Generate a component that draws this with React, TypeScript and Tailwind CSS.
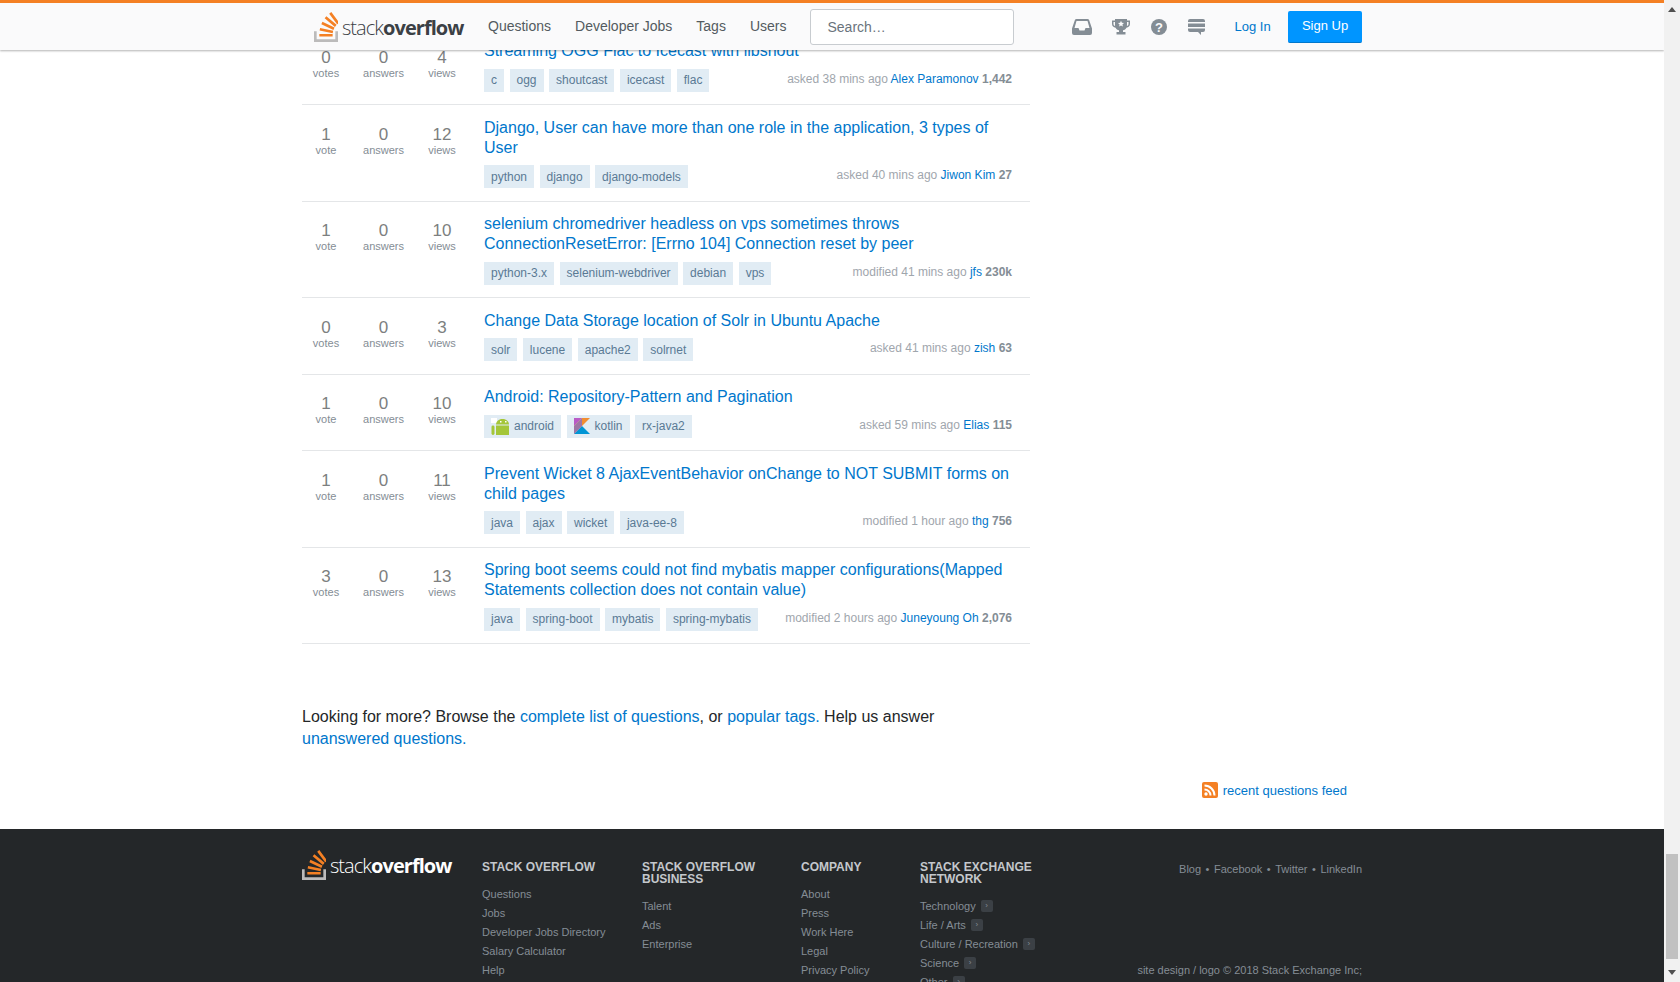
import React from 'react';

const FONT = "font-['Liberation_Sans',Arial,sans-serif]";

interface Question {
  votes: number;
  views: number;
  title: string;
  tags: string[];
  action: string;
  user: string;
  rep: string;
}

const QUESTIONS: Question[] = [
  { votes: 0, views: 4, title: 'Streaming OGG Flac to Icecast with libshout', tags: ['c', 'ogg', 'shoutcast', 'icecast', 'flac'], action: 'asked 38 mins ago', user: 'Alex Paramonov', rep: '1,442' },
  { votes: 1, views: 12, title: 'Django, User can have more than one role in the application, 3 types of User', tags: ['python', 'django', 'django-models'], action: 'asked 40 mins ago', user: 'Jiwon Kim', rep: '27' },
  { votes: 1, views: 10, title: 'selenium chromedriver headless on vps sometimes throws ConnectionResetError: [Errno 104] Connection reset by peer', tags: ['python-3.x', 'selenium-webdriver', 'debian', 'vps'], action: 'modified 41 mins ago', user: 'jfs', rep: '230k' },
  { votes: 0, views: 3, title: 'Change Data Storage location of Solr in Ubuntu Apache', tags: ['solr', 'lucene', 'apache2', 'solrnet'], action: 'asked 41 mins ago', user: 'zish', rep: '63' },
  { votes: 1, views: 10, title: 'Android: Repository-Pattern and Pagination', tags: ['android', 'kotlin', 'rx-java2'], action: 'asked 59 mins ago', user: 'Elias', rep: '115' },
  { votes: 1, views: 11, title: 'Prevent Wicket 8 AjaxEventBehavior onChange to NOT SUBMIT forms on child pages', tags: ['java', 'ajax', 'wicket', 'java-ee-8'], action: 'modified 1 hour ago', user: 'thg', rep: '756' },
  { votes: 3, views: 13, title: 'Spring boot seems could not find mybatis mapper configurations(Mapped Statements collection does not contain value)', tags: ['java', 'spring-boot', 'mybatis', 'spring-mybatis'], action: 'modified 2 hours ago', user: 'Juneyoung Oh', rep: '2,076' },
];

// Stack Overflow mark: tray plus fanned orange bars
const LogoMark = () => (
  <svg width="24" height="30" viewBox="22.6 14.9 69.5 86.6" className="shrink-0">
    <path d="M84.4 93.8V70.6h7.700v30.900H22.600V70.600h7.700v23.200z" fill="#bcbbbb" />
    <path
      d="M38.800 68.400l37.800 7.900 1.600-7.600-37.800-7.900-1.600 7.600zm5-18l35 16.300 3.200-7-35-16.400-3.200 7.100zm9.700-17.200l29.700 24.700 4.900-5.900-29.700-24.700-4.900 5.900zm19.200-18.300l-6.200 4.600 23 31 6.200-4.600-23-31zM38 86h38.600v-7.700H38V86z"
      fill="#f48024"
    />
  </svg>
);

const Logo = ({ dark }: { dark?: boolean }) => (
  <div className="flex items-end gap-[4px]">
    <LogoMark />
    <span className={`pb-[1px] font-['Open_Sans',sans-serif] text-[20px] leading-[26px] tracking-[-0.95px] whitespace-nowrap ${dark ? 'text-white' : 'text-[#3b4045]'}`}>
      <span className="font-light">stack</span>
      <span className="font-bold">overflow</span>
    </span>
  </div>
);

const AndroidIcon = () => (
  <svg width="18" height="17" viewBox="0 0 18 17" className="shrink-0">
    <rect x="0" y="0" width="6" height="5" fill="#fff" />
    <path d="M5 6.500C5 3.500 7.500 1 11.500 1S18 3.500 18 6.500z" fill="#a4c639" />
    <rect x="9" y="3" width="1.500" height="1.500" fill="#fff" />
    <rect x="14" y="3" width="1.500" height="1.500" fill="#fff" />
    <rect x="5" y="7.500" width="13" height="9.500" fill="#a4c639" />
    <rect x="0.500" y="7.500" width="3" height="9.500" rx="1.400" fill="#a4c639" />
  </svg>
);

const KotlinIcon = () => (
  <svg width="16" height="16" viewBox="0 0 16 16" className="shrink-0">
    <path d="M0 0h8L0 8z" fill="#b95bc6" />
    <path d="M8 0h8L0 16V8z" fill="#f18e33" />
    <path d="M0 16l8-8 8 8z" fill="#0095d5" />
    <path d="M8 0 0 8v8L8 8z" fill="#7a6cd6" opacity=".7" />
  </svg>
);

const Tag = ({ name }: { name: string }) => (
  <span className="flex h-[23px] items-center gap-[5px] bg-[#e1ecf4] px-[7px] text-[12px] text-[#5a7a94]">
    {name === 'android' && <AndroidIcon />}
    {name === 'kotlin' && <KotlinIcon />}
    {name}
  </span>
);

const Stat = ({ value, label, width }: { value: number; label: string; width: string }) => (
  <div className={`flex flex-col items-center ${width}`}>
    <span className="text-[17px] leading-[16px] text-[#7d7f80]">{value}</span>
    <span className="text-[11px] leading-[14px] text-[#848d95]">{label}</span>
  </div>
);

const QuestionRow = ({ q }: { q: Question }) => (
  <div className="flex border-b border-[#e4e6e8] pt-[12.500px] pb-[12.500px]">
    <div className="flex w-[182px] shrink-0 pt-[9px]">
      <Stat value={q.votes} label={q.votes === 1 ? 'vote' : 'votes'} width="w-[48px]" />
      <Stat value={0} label="answers" width="w-[67px]" />
      <Stat value={q.views} label="views" width="w-[50px]" />
    </div>
    <div className="min-w-0 flex-1 pr-[18px]">
      <a className="block text-[16px] leading-[20px] text-[#0077cc]">{q.title}</a>
      <div className="mt-[7.500px] flex items-center justify-between">
        <div className="flex gap-[5.500px]">
          {q.tags.map((t) => (
            <Tag key={t} name={t} />
          ))}
        </div>
        <div className="-mt-[3px] text-[12px] text-[#9fa6ad]">
          {q.action} <a className="text-[#0077cc]">{q.user}</a> <b className="text-[#848d95]">{q.rep}</b>
        </div>
      </div>
    </div>
  </div>
);

const FooterColumn = ({ title, links, width, chevrons }: { title: string; links: string[]; width: string; chevrons?: boolean }) => (
  <div className={width}>
    <h5 className="text-[12px] leading-[12px] font-bold uppercase text-[#c4c8cc]">{title}</h5>
    <ul className="mt-[12px]">
      {links.map((l) => (
        <li key={l} className="flex h-[19px] items-center gap-[5px] text-[11px] text-[#848d95]">
          {l}
          {chevrons && (
            <span className="flex h-[12px] w-[12px] items-center justify-center rounded-[2px] bg-[#3b4045] text-[8px] leading-none text-[#848d95]">›</span>
          )}
        </li>
      ))}
    </ul>
  </div>
);

const Header = () => (
  <header className="absolute top-0 left-0 z-10 h-[50px] w-full border-t-[3px] border-[#f48024] bg-[#fafafb] shadow-[0_1px_2px_rgba(0,0,0,0.3)]">
    <div className="mx-auto flex h-full w-[1060px] items-center text-[14px] whitespace-nowrap text-[#535a60]">
      <div className="ml-[12px] w-[174px] shrink-0">
        <Logo />
      </div>
      <nav className="flex shrink-0 gap-[24px]">
        <a>Questions</a>
        <a>Developer Jobs</a>
        <a>Tags</a>
        <a>Users</a>
      </nav>
      <div className="ml-[24px] flex h-[36px] w-[204px] shrink-0 items-center rounded-[3px] border border-[#c8ccd0] bg-white px-[16px] pt-[1px] text-[14px] text-[#6a737c]">
        Search…
      </div>
      <div className="ml-[58px] flex shrink-0 items-center gap-[20px]">
        <svg width="20" height="18" viewBox="0 0 20 18"><path d="M4.500 1h11c.8 0 1.300.4 1.600 1.100L20 10.500V15a2 2 0 0 1-2 2H2a2 2 0 0 1-2-2v-4.500L2.900 2.100C3.200 1.400 3.700 1 4.500 1zm0 2L2.500 10h4l1 2.500h5l1-2.500h4l-2-7z" fill="#848d95" /></svg>
        <svg width="18" height="18" viewBox="0 0 18 18"><path d="M3 1h12v1.500h3V6c0 2.200-1.600 3.500-3.600 3.700-.7 1.300-1.900 2.200-3.400 2.500V14h2.500v2.500h-9V14H7v-1.800c-1.500-.3-2.700-1.200-3.400-2.500C1.600 9.500 0 8.200 0 6V2.500h3zM1.500 4v2c0 1 .6 1.800 1.600 2.100C3 7.500 3 7 3 6.500V4zm15 0H15v2.500c0 .5 0 1-.1 1.600 1-.3 1.600-1.100 1.600-2.100zM9 2.800l-.9 2-2.100.2 1.600 1.400-.5 2.100L9 7.400l1.900 1.100-.5-2.100L12 5l-2.100-.2z" fill="#848d95" /></svg>
        <svg width="18" height="18" viewBox="0 0 18 18"><circle cx="9" cy="9" r="8" fill="#848d95" /><text x="9" y="13.500" textAnchor="middle" fontSize="13" fontWeight="700" fill="#fafafb" fontFamily="Liberation Sans">?</text></svg>
        <svg width="17" height="18" viewBox="0 0 17 18"><path d="M2 1h13a2 2 0 0 1 2 2v1H0V3a2 2 0 0 1 2-2zM0 5.500h17v3.500H0zM0 10.500h17V12a2 2 0 0 1-2 2h-2v3l-3-3H2a2 2 0 0 1-2-2z" fill="#848d95" /></svg>
      </div>
      <a className="ml-[29px] shrink-0 text-[13px] text-[#0077cc]">Log In</a>
      <button className="ml-auto h-[32px] w-[74px] shrink-0 rounded-[2px] border-b border-[#0077cc] bg-[#0095ff] text-[13px] text-white">Sign Up</button>
    </div>
  </header>
);

const Footer = () => (
  <footer className="h-[300px] bg-[#242729] pt-[21px]">
    <div className="mx-auto flex w-[1060px]">
      <div className="w-[180px] shrink-0">
        <Logo dark />
      </div>
      <div className="flex pt-[11px]">
        <FooterColumn width="w-[160px]" title="Stack Overflow" links={['Questions', 'Jobs', 'Developer Jobs Directory', 'Salary Calculator', 'Help', 'Mobile']} />
        <FooterColumn width="w-[159px]" title="Stack Overflow Business" links={['Talent', 'Ads', 'Enterprise']} />
        <FooterColumn width="w-[119px]" title="Company" links={['About', 'Press', 'Work Here', 'Legal', 'Privacy Policy', 'Contact Us']} />
        <FooterColumn width="w-[130px]" chevrons title="Stack Exchange Network" links={['Technology', 'Life / Arts', 'Culture / Recreation', 'Science', 'Other']} />
      </div>
      <div className="flex-1 pt-[12px] text-right text-[11px] text-[#848d95]">
        <div className="flex justify-end gap-[4.500px] leading-[14px]">
          <span>Blog</span><span>•</span><span>Facebook</span><span>•</span><span>Twitter</span><span>•</span><span>LinkedIn</span>
        </div>
        <p className="mt-[86px] -ml-[60px] leading-[16px]">
          site design / logo © 2018 Stack Exchange Inc;
          <br />
          user contributions licensed under cc by-sa 3.0
        </p>
      </div>
    </div>
  </footer>
);

const Scrollbar = () => (
  <div className="flex h-full w-[16px] shrink-0 flex-col items-center bg-[#f1f1f1]">
    <svg width="8" height="5" viewBox="0 0 8 5" className="mt-[7px]"><path d="M0 5 4 0l4 5z" fill="#505050" /></svg>
    <div className="mt-auto h-[105px] w-[12px] bg-[#c1c1c1]" />
    <svg width="8" height="5" viewBox="0 0 8 5" className="mt-[11px] mb-[7px]"><path d="M0 0l4 5 4-5z" fill="#505050" /></svg>
  </div>
);

export default function App() {
  return (
    <div className={`flex h-[982px] w-full overflow-hidden bg-white ${FONT}`}>
      <div className="relative min-w-0 flex-1 overflow-hidden">
        <Header />
        <main className="mx-auto w-[1060px] pt-[28.500px]">
          <div className="w-[728px]">
            {QUESTIONS.map((q) => (
              <QuestionRow key={q.title} q={q} />
            ))}
            <p className="mt-[62px] w-[690px] text-[16px] leading-[22px] text-[#242729]">
              Looking for more? Browse the <a className="text-[#0077cc]">complete list of questions</a>, or{' '}
              <a className="text-[#0077cc]">popular tags.</a> Help us answer <a className="text-[#0077cc]">unanswered questions.</a>
            </p>
          </div>
          <div className="mt-[30.500px] flex items-center justify-end gap-[5px] pr-[15px] text-[13px] text-[#0077cc]">
            <svg width="16" height="16" viewBox="0 0 16 16">
              <rect width="16" height="16" rx="2" fill="#f48024" />
              <circle cx="4" cy="12" r="1.700" fill="#fff" />
              <path d="M2.500 7.500a6 6 0 0 1 6 6M2.500 3.500a10 10 0 0 1 10 10" stroke="#fff" strokeWidth="2" fill="none" />
            </svg>
            recent questions feed
          </div>
        </main>
        <div className="mt-[28.500px]">
          <Footer />
        </div>
      </div>
      <Scrollbar />
    </div>
  );
}
